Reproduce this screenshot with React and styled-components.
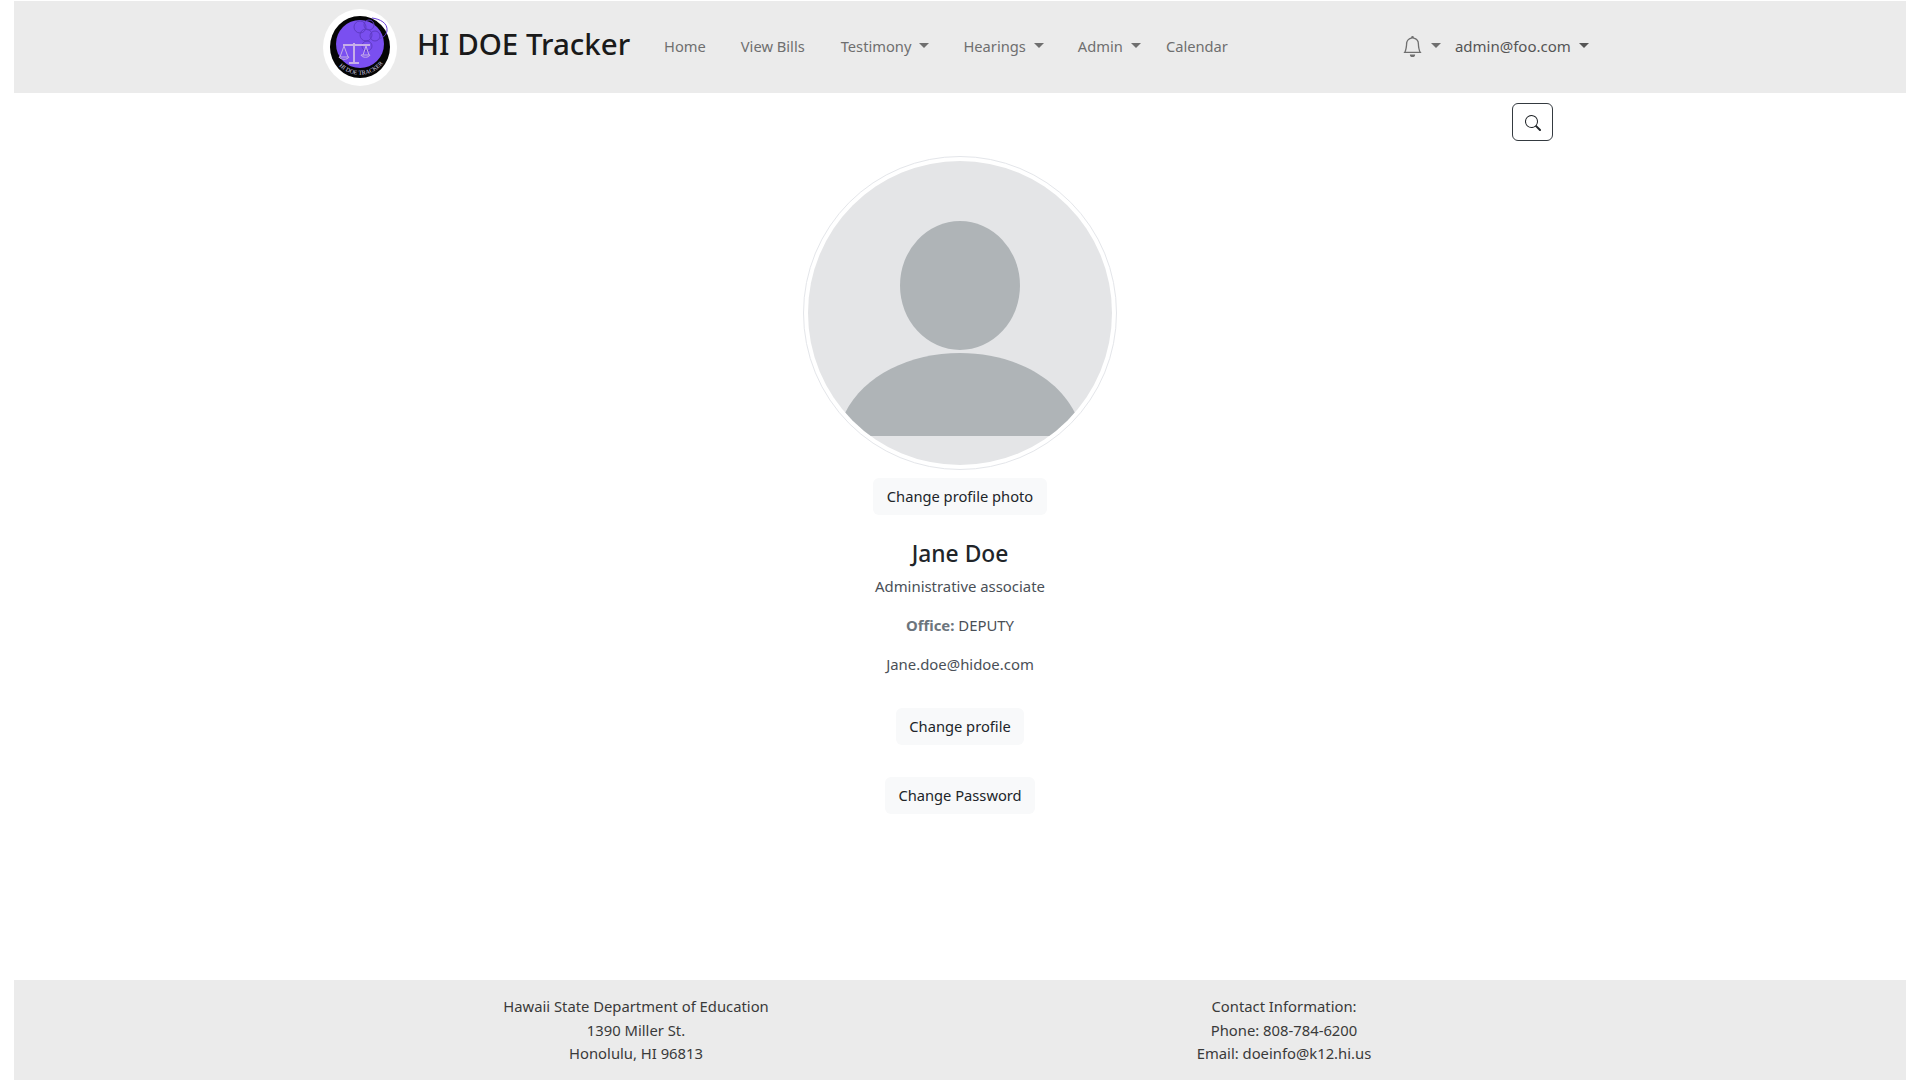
import React from "react";
import styled, { createGlobalStyle } from "styled-components";

const GlobalStyle = createGlobalStyle`
  * {
    margin: 0;
    padding: 0;
    box-sizing: border-box;
  }
  body {
    background: #fff;
    color: #212529;
    font-family: "Noto Sans", "Open Sans", sans-serif;
    font-size: 15px;
    line-height: 24px;
  }
`;

const Page = styled.div`
  height: 1080px;
  padding: 1px 14px 0;
  display: flex;
  flex-direction: column;
  overflow: hidden;
`;

const Navbar = styled.nav`
  height: 92px;
  flex: none;
  background: #ebebeb;
  padding-left: 309px;
  display: flex;
  align-items: center;
`;

const LogoBadge = styled.div`
  width: 74px;
  height: 77px;
  border-radius: 50%;
  background: #fff;
  display: flex;
  align-items: center;
  justify-content: center;
  flex: none;
`;

const Brand = styled.a`
  margin-left: 20px;
  width: 247px;
  flex: none;
  font-size: 29.5px;
  font-weight: 500;
  line-height: 40px;
  color: #1a1a1a;
  margin-top: -6px;
  white-space: nowrap;
`;

const NavLinks = styled.div`
  display: flex;
  align-items: center;
  margin-top: -2px;
`;

const NavLink = styled.a`
  font-size: 14.7px;
  color: #6f6f6f;
  white-space: nowrap;
  display: inline-flex;
  align-items: center;
  margin-right: ${(p) => p.$gap}px;
`;

const Caret = styled.span`
  display: inline-block;
  margin-left: ${(p) => p.$left || 8}px;
  border-top: 5px solid currentColor;
  border-left: 5px solid transparent;
  border-right: 5px solid transparent;
  transform: translateY(-1px);
`;

const NavRight = styled.div`
  margin-left: 174px;
  display: flex;
  align-items: center;
  color: #6f6f6f;
`;

const UserLink = styled.a`
  margin-left: 14px;
  font-size: 15px;
  color: #555;
  white-space: nowrap;
  display: inline-flex;
  align-items: center;
`;

const SearchRow = styled.div`
  flex: none;
  display: flex;
  justify-content: flex-end;
  padding: 10px 353px 0 0;
`;

const SearchButton = styled.button`
  width: 41px;
  height: 38px;
  padding-top: 2px;
  background: #fff;
  border: 1px solid #343a40;
  border-radius: 6px;
  display: flex;
  align-items: center;
  justify-content: center;
`;

const Profile = styled.main`
  flex: 1;
  display: flex;
  flex-direction: column;
  align-items: center;
`;

const Avatar = styled.div`
  margin-top: 15px;
  width: 314px;
  height: 314px;
  border-radius: 50%;
  border: 1px solid #e4e6ea;
  padding: 4px;
  background: #fff;
  flex: none;
`;

const LightButton = styled.button`
  background: #f8f9fa;
  border: none;
  border-radius: 6px;
  height: 37px;
  padding: 0 ${(p) => p.$pad || 13}px 2px;
  font-family: inherit;
  font-size: 14.7px;
  color: #212529;
  margin-top: ${(p) => p.$top}px;
`;

const Name = styled.h1`
  margin-top: 21px;
  font-size: 22.8px;
  line-height: 36px;
  font-weight: 500;
  color: #212529;
`;

const Detail = styled.p`
  margin-top: ${(p) => p.$top}px;
  font-size: 14.9px;
  line-height: 24px;
  color: #4a5057;
`;

const Label = styled.strong`
  color: #6c757d;
  font-weight: 700;
`;

const Footer = styled.footer`
  height: 100px;
  flex: none;
  background: #ebebeb;
  display: flex;
  justify-content: center;
  padding-top: 15px;
`;

const FooterInner = styled.div`
  width: 1296px;
  display: grid;
  grid-template-columns: 1fr 1fr;
  text-align: center;
  font-size: 14.8px;
  line-height: 23.5px;
  color: #3a3a3a;
`;

function Logo() {
  return (
    <svg width="60" height="62" viewBox="0 0 60 62">
      <ellipse cx="30" cy="31" rx="30" ry="31" fill="#050505" />
      <circle cx="30" cy="28" r="24" fill="#7a4ff0" />
      <g fill="none" stroke="#5f3bc4" strokeWidth="1">
        <circle cx="30" cy="11" r="6" />
        <circle cx="39" cy="9" r="5" />
        <circle cx="36" cy="19" r="6" />
        <circle cx="45" cy="20" r="5" />
        <circle cx="37" cy="30" r="5" />
        <path d="M42 2c8 1 16 5 15 13-1 5-5 7-8 8" stroke="#6a40d8" />
      </g>
      <g fill="none" stroke="#c6aee8" strokeWidth="1">
        <path d="M13 29h27M24 27v20M19 47h10" strokeWidth="2" />
        <path d="M14 30l-4 11M14 30l4 11M9 41c1 3 9 3 10 0z" />
        <path d="M36 30l-3 9M36 30l3 9M31 39c1 3 8 3 9 0z" />
      </g>
      <path id="logo-arc" d="M6 46a29 29 0 0 0 48 0" fill="none" />
      <text fontSize="6" fill="#d8d0e8" fontFamily="Liberation Serif, serif">
        <textPath href="#logo-arc" startOffset="5">HI DOE TRACKER</textPath>
      </text>
    </svg>
  );
}

function Bell() {
  return (
    <svg width="21" height="21" viewBox="0 0 16 16" fill="currentColor">
      <path d="M8 16a2 2 0 0 0 2-2H6a2 2 0 0 0 2 2zM8 1.918l-.797.161A4.002 4.002 0 0 0 4 6c0 .628-.134 2.197-.459 3.742-.16.767-.376 1.566-.663 2.258h10.244c-.287-.692-.502-1.49-.663-2.258C12.134 8.197 12 6.628 12 6a4.002 4.002 0 0 0-3.203-3.92L8 1.917zM14.22 12c.223.447.481.801.78 1H1c.299-.199.557-.553.78-1C2.68 10.2 3 6.88 3 6c0-2.42 1.72-4.44 4.005-4.901a1 1 0 1 1 1.99 0A5.002 5.002 0 0 1 13 6c0 .88.32 4.2 1.22 6z" />
    </svg>
  );
}

function SearchIcon() {
  return (
    <svg width="16" height="16" viewBox="0 0 16 16" fill="#212529">
      <path d="M11.742 10.344a6.5 6.5 0 1 0-1.397 1.398h-.001c.03.04.062.078.098.115l3.85 3.85a1 1 0 0 0 1.415-1.414l-3.85-3.85a1.007 1.007 0 0 0-.115-.1zM12 6.5a5.5 5.5 0 1 1-11 0 5.5 5.5 0 0 1 11 0z" />
    </svg>
  );
}

function AvatarArt() {
  return (
    <svg width="304" height="304" viewBox="0 0 304 304">
      <defs>
        <clipPath id="avatar-clip">
          <circle cx="152" cy="152" r="152" />
        </clipPath>
      </defs>
      <circle cx="152" cy="152" r="152" fill="#e4e5e7" />
      <g clipPath="url(#avatar-clip)" fill="#afb4b7">
        <ellipse cx="152" cy="124.5" rx="60" ry="64.5" />
        <path d="M37 252C56 214 102 192 152 192S248 214 267 252L267 275H37Z" />
      </g>
    </svg>
  );
}

export default function App() {
  return (
    <Page>
      <GlobalStyle />
      <Navbar>
        <LogoBadge>
          <Logo />
        </LogoBadge>
        <Brand>HI DOE Tracker</Brand>
        <NavLinks>
          <NavLink $gap={35}>Home</NavLink>
          <NavLink $gap={36}>View Bills</NavLink>
          <NavLink $gap={34}>Testimony<Caret /></NavLink>
          <NavLink $gap={34}>Hearings<Caret /></NavLink>
          <NavLink $gap={25}>Admin<Caret /></NavLink>
          <NavLink $gap={0}>Calendar</NavLink>
          <NavRight>
            <Bell />
            <Caret $left={8} />
            <UserLink>admin@foo.com<Caret /></UserLink>
          </NavRight>
        </NavLinks>
      </Navbar>
      <SearchRow>
        <SearchButton aria-label="Search">
          <SearchIcon />
        </SearchButton>
      </SearchRow>
      <Profile>
        <Avatar>
          <AvatarArt />
        </Avatar>
        <LightButton $top={8} $pad={14}>Change profile photo</LightButton>
        <Name>Jane Doe</Name>
        <Detail $top={2}>Administrative associate</Detail>
        <Detail $top={15}><Label>Office:</Label> DEPUTY</Detail>
        <Detail $top={15}>Jane.doe@hidoe.com</Detail>
        <LightButton $top={32}>Change profile</LightButton>
        <LightButton $top={32}>Change Password</LightButton>
      </Profile>
      <Footer>
        <FooterInner>
          <div>
            Hawaii State Department of Education<br />
            1390 Miller St.<br />
            Honolulu, HI 96813
          </div>
          <div>
            Contact Information:<br />
            Phone: 808-784-6200<br />
            Email: doeinfo@k12.hi.us
          </div>
        </FooterInner>
      </Footer>
    </Page>
  );
}
